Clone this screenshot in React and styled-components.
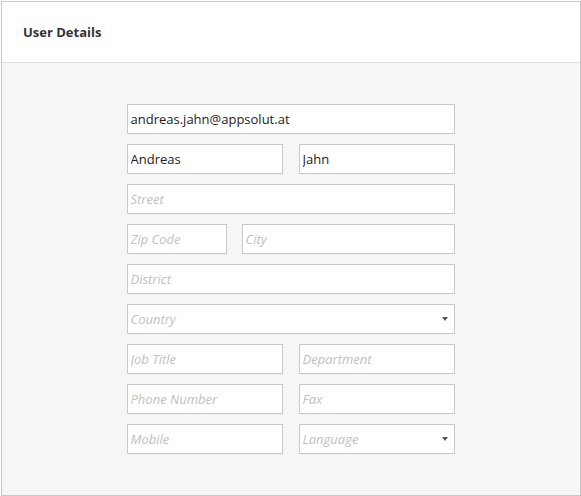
import React from "react";
import styled, { createGlobalStyle } from "styled-components";

const GlobalStyle = createGlobalStyle`
  * { box-sizing: border-box; }
  body {
    margin: 0;
    padding: 1px;
    font-family: "Open Sans", "Noto Sans", sans-serif;
    background: #ffffff;
  }
`;

const Panel = styled.div`
  width: 580px;
  height: 495px;
  border: 1px solid #c8c8c8;
  display: flex;
  flex-direction: column;
  background: #f6f6f6;
`;

const Header = styled.div`
  height: 61px;
  background: #ffffff;
  border-bottom: 1px solid #dcdcdc;
  display: flex;
  align-items: center;
  padding: 0 21px;
  flex-shrink: 0;
`;

const Title = styled.h2`
  margin: 0;
  font-size: 13px;
  font-weight: 700;
  color: #333333;
`;

const Body = styled.div`
  flex: 1;
  display: flex;
  justify-content: center;
  padding-top: 41px;
  padding-right: 1px;
`;

const Form = styled.div`
  width: 328px;
  display: flex;
  flex-direction: column;
  gap: 10px;
`;

const Row = styled.div`
  display: grid;
  grid-template-columns: ${(p) => p.$cols || "1fr"};
  column-gap: ${(p) => p.$gap || "16px"};
`;

const FieldWrap = styled.div`
  position: relative;
`;

const Input = styled.input`
  display: block;
  width: 100%;
  height: 30px;
  border: 1px solid #c8c8c8;
  border-radius: 0;
  background: #ffffff;
  padding: 0 3px;
  font-family: "Open Sans", "Noto Sans", sans-serif;
  font-size: 13px;
  color: #222222;
  outline: none;

  &::placeholder {
    color: #c0c0c0;
    font-style: italic;
  }
`;

const Caret = styled.span`
  position: absolute;
  right: 7px;
  top: 13px;
  width: 0;
  height: 0;
  border-left: 3.5px solid transparent;
  border-right: 3.5px solid transparent;
  border-top: 4px solid #555555;
  pointer-events: none;
`;

function Field({ value, placeholder, select }) {
  return (
    <FieldWrap>
      <Input defaultValue={value} placeholder={placeholder} readOnly={select} />
      {select && <Caret />}
    </FieldWrap>
  );
}

export default function App() {
  return (
    <>
      <GlobalStyle />
      <Panel>
        <Header>
          <Title>User Details</Title>
        </Header>
        <Body>
          <Form>
            <Row>
              <Field value="andreas.jahn@appsolut.at" />
            </Row>
            <Row $cols="156px 156px">
              <Field value="Andreas" />
              <Field value="Jahn" />
            </Row>
            <Row>
              <Field placeholder="Street" />
            </Row>
            <Row $cols="100px 213px" $gap="15px">
              <Field placeholder="Zip Code" />
              <Field placeholder="City" />
            </Row>
            <Row>
              <Field placeholder="District" />
            </Row>
            <Row>
              <Field placeholder="Country" select />
            </Row>
            <Row $cols="156px 156px">
              <Field placeholder="Job Title" />
              <Field placeholder="Department" />
            </Row>
            <Row $cols="156px 156px">
              <Field placeholder="Phone Number" />
              <Field placeholder="Fax" />
            </Row>
            <Row $cols="156px 156px">
              <Field placeholder="Mobile" />
              <Field placeholder="Language" select />
            </Row>
          </Form>
        </Body>
      </Panel>
    </>
  );
}
